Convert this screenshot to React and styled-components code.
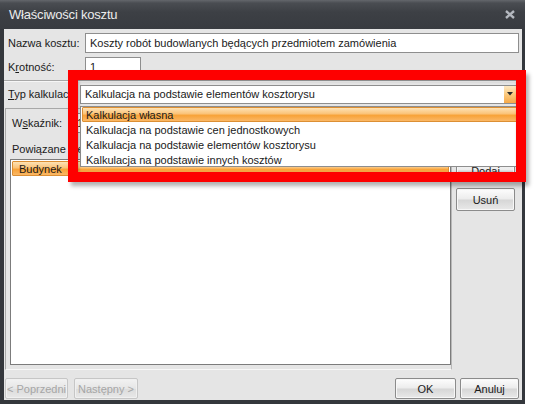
import React from "react";
import styled, { createGlobalStyle, css } from "styled-components";

const GlobalStyle = createGlobalStyle`
  html, body {
    margin: 0;
    padding: 0;
    background: #ffffff;
  }
  body {
    font-family: "Liberation Sans", Arial, sans-serif;
    font-size: 11px;
    color: #1a1a1a;
  }
`;

const Page = styled.div`
  position: relative;
  width: 538px;
  height: 404px;
  overflow: hidden;
  background: #ffffff;
`;

const Window = styled.div`
  width: 525px;
  height: 404px;
  display: flex;
  flex-direction: column;
  background: #34373c;
  box-sizing: border-box;
`;

const TitleBar = styled.div`
  height: 29px;
  flex: none;
  display: flex;
  align-items: center;
  justify-content: space-between;
  padding: 0 10px 0 9px;
  background: linear-gradient(#64676c 0, #4a4d52 3px, #3d4045 12px, #383b40 100%);
`;

const Title = styled.span`
  font-size: 13px;
  color: #ececec;
  letter-spacing: -0.2px;
`;

const Client = styled.div`
  flex: 1;
  margin: 0 3px 4px 4px;
  background: #e5e5e5;
  display: flex;
  flex-direction: column;
  min-height: 0;
`;

const Form = styled.div`
  display: flex;
  flex-direction: column;
  gap: 4px;
  padding: 4px 3px 3px 4px;
`;

const Row = styled.div`
  display: flex;
  align-items: center;
  height: 20px;
`;

const Label = styled.span`
  width: ${(p) => p.$w || 77}px;
  flex: none;
  white-space: nowrap;
`;

const Key = styled.span`
  text-decoration: underline;
`;

const TextBox = styled.div`
  height: 20px;
  box-sizing: border-box;
  width: ${(p) => (p.$w ? `${p.$w}px` : "auto")};
  flex: ${(p) => (p.$w ? "none" : "1")};
  background: #ffffff;
  border: 1px solid #8e8e8e;
  padding: 0 ${(p) => p.$pad || 4}px;
  display: flex;
  align-items: center;
  white-space: nowrap;
  overflow: hidden;
`;

const TypSection = styled.div`
  height: 28px;
  box-sizing: border-box;
  border-top: 1px solid #a8a8a8;
  box-shadow: inset 0 1px 0 #f6f6f6;
  display: flex;
  align-items: center;
  padding: 0 3px 1px 4px;
`;

const Combo = styled.div`
  flex: 1;
  height: 19px;
  box-sizing: border-box;
  background: #ffffff;
  border: 1px solid #8e8e8e;
  display: flex;
  align-items: center;
  padding-left: 4px;
  white-space: nowrap;
`;

const ComboText = styled.span`
  flex: 1;
`;

const ComboArrow = styled.div`
  width: 12px;
  height: 17px;
  flex: none;
  margin-right: 2px;
  background: linear-gradient(#fde9c4, #fbc677 55%, #f6a948);
  display: flex;
  align-items: center;
  justify-content: center;
`;

const Body = styled.div`
  flex: 1;
  display: flex;
  min-height: 0;
`;

const LeftPanel = styled.div`
  flex: 1;
  margin-left: 1px;
  border-left: 1px solid #a8a8a8;
  border-top: 1px solid #a8a8a8;
  border-bottom: 1px solid #f8f8f8;
  border-right: 1px solid #b8b8b8;
  display: flex;
  flex-direction: column;
  padding: 4px 0 4px 4px;
`;

const SmallRow = styled.div`
  display: flex;
  align-items: center;
  height: 20px;
  padding-left: 2px;
`;

const GroupLabel = styled.div`
  height: 14px;
  white-space: nowrap;
  display: flex;
  align-items: center;
  margin: 9px 0 3px 2px;
`;

const ListBox = styled.div`
  flex: 1;
  background: #ffffff;
  border: 1px solid #7c7c7c;
  padding: 1px;
`;

const Highlight = css`
  background: linear-gradient(#fee2b4 0%, #fbc57c 42%, #f8a339 58%, #fbb866 100%);
  border: 1px solid #dc8f34;
  border-radius: 1px;
`;

const ListItem = styled.div`
  height: 15px;
  box-sizing: border-box;
  display: flex;
  align-items: center;
  padding-left: ${(p) => (p.$indent ? 6 : 3)}px;
  white-space: nowrap;
  border: 1px solid transparent;
  ${(p) => p.$selected && Highlight}
`;

const SidePanel = styled.div`
  width: 70px;
  flex: none;
  display: flex;
  flex-direction: column;
  gap: 6px;
  padding: 51px 0 0 4px;
  box-sizing: border-box;
`;

const Button = styled.div`
  width: ${(p) => p.$w}px;
  height: ${(p) => p.$h || 21}px;
  box-sizing: border-box;
  flex: none;
  display: flex;
  align-items: center;
  justify-content: center;
  border-radius: 2px;
  white-space: nowrap;
  border: 1px solid ${(p) => (p.$disabled ? "#c6c6c6" : "#8b8b8b")};
  color: ${(p) => (p.$disabled ? "#a6a6a6" : "#1a1a1a")};
  background: ${(p) =>
    p.$disabled
      ? "linear-gradient(#f2f2f2, #e6e6e6 50%, #dcdcdc 51%, #e8e8e8)"
      : "linear-gradient(#fdfdfd, #ececec 48%, #d6d6d6 52%, #e9e9e9)"};
  box-shadow: inset 0 0 0 1px ${(p) => (p.$disabled ? "#f0f0f0" : "#f7f7f7")};
`;

const Footer = styled.div`
  height: 30px;
  flex: none;
  display: flex;
  align-items: flex-start;
  justify-content: space-between;
  padding: 8px 3px 0 1px;
  box-sizing: border-box;
`;

const ButtonGroup = styled.div`
  display: flex;
  gap: ${(p) => p.$gap}px;
`;

const DropList = styled.div`
  position: absolute;
  left: 80px;
  top: 106px;
  width: 439px;
  height: 61px;
  box-sizing: border-box;
  background: #ffffff;
  border: 1px solid #8e8e8e;
  padding: 0 1px;
`;

const Annotation = styled.div`
  position: absolute;
  left: 68px;
  top: 70px;
  width: 458px;
  height: 112px;
  box-sizing: border-box;
  border: 10px solid #fe0000;
  box-shadow: 3px 4px 4px rgba(0, 0, 0, 0.3), inset 1px 1px 3px rgba(0, 0, 0, 0.25);
`;

const options = [
  "Kalkulacja własna",
  "Kalkulacja na podstawie cen jednostkowych",
  "Kalkulacja na podstawie elementów kosztorysu",
  "Kalkulacja na podstawie innych kosztów",
];

function CloseIcon() {
  return (
    <svg width="10" height="9" viewBox="0 0 10 9">
      <path d="M1 1 L9 8 M9 1 L1 8" stroke="#b4b8bf" strokeWidth="2.4" />
    </svg>
  );
}

function Arrow() {
  return (
    <svg width="6" height="4" viewBox="0 0 6 4">
      <path d="M0 0 H6 L3 3.5 Z" fill="#2b2b2b" />
    </svg>
  );
}

export default function App() {
  return (
    <Page>
      <GlobalStyle />
      <Window>
        <TitleBar>
          <Title>Właściwości kosztu</Title>
          <CloseIcon />
        </TitleBar>
        <Client>
          <Form>
            <Row>
              <Label>Nazwa kosztu:</Label>
              <TextBox>Koszty robót budowlanych będących przedmiotem zamówienia</TextBox>
            </Row>
            <Row>
              <Label>
                K<Key>r</Key>otność:
              </Label>
              <TextBox $w={56}>1</TextBox>
            </Row>
          </Form>
          <TypSection>
            <Label $w={72}>
              <Key>T</Key>yp kalkulacji:
            </Label>
            <Combo>
              <ComboText>Kalkulacja na podstawie elementów kosztorysu</ComboText>
              <ComboArrow>
                <Arrow />
              </ComboArrow>
            </Combo>
          </TypSection>
          <Body>
            <LeftPanel>
              <SmallRow>
                <Label $w={58}>
                  W<Key>s</Key>kaźnik:
                </Label>
                <TextBox $w={60} $pad={6}>
                  1
                </TextBox>
              </SmallRow>
              <GroupLabel>Powiązane elementy:</GroupLabel>
              <ListBox>
                <ListItem $selected $indent>
                  Budynek
                </ListItem>
              </ListBox>
            </LeftPanel>
            <SidePanel>
              <Button $w={59} $h={23}>
                Dodaj
              </Button>
              <Button $w={59} $h={23}>
                Usuń
              </Button>
            </SidePanel>
          </Body>
          <Footer>
            <ButtonGroup $gap={6}>
              <Button $w={63} $disabled>
                &lt; Poprzedni
              </Button>
              <Button $w={64} $disabled>
                Następny &gt;
              </Button>
            </ButtonGroup>
            <ButtonGroup $gap={4}>
              <Button $w={61}>OK</Button>
              <Button $w={59}>Anuluj</Button>
            </ButtonGroup>
          </Footer>
        </Client>
      </Window>
      <DropList>
        {options.map((o, i) => (
          <ListItem key={o} $selected={i === 0}>
            {o}
          </ListItem>
        ))}
      </DropList>
      <Annotation />
    </Page>
  );
}
